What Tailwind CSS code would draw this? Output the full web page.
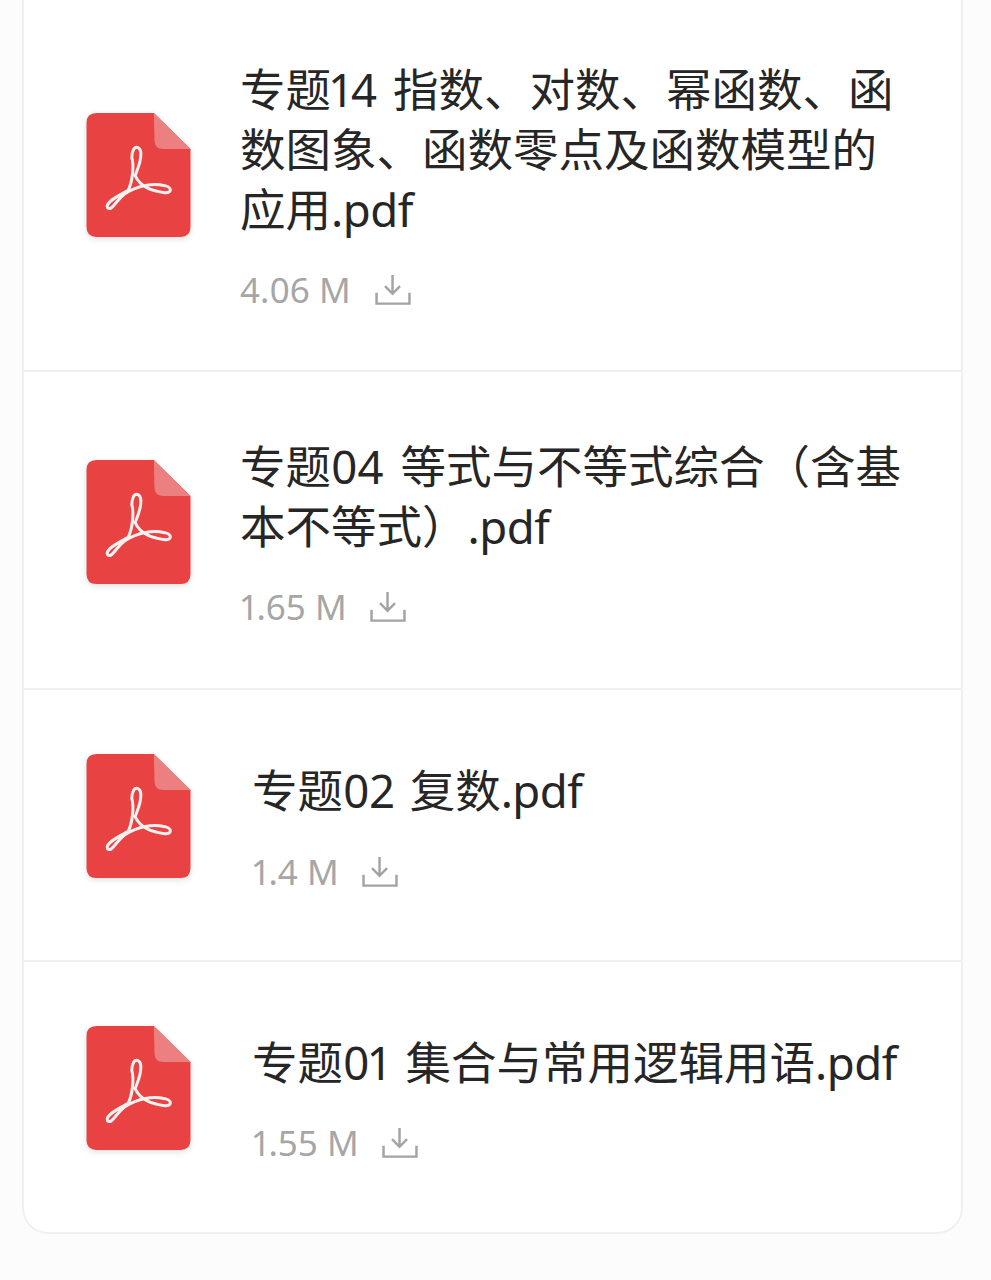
<!DOCTYPE html>
<html lang="zh">
<head>
<meta charset="utf-8">
<script src="https://cdn.jsdelivr.net/npm/@tailwindcss/browser@4"></script>
</head>
<body class="m-0 w-[991px] h-[1280px] overflow-hidden bg-[#fcfcfc] proportional-nums font-['Noto_Sans','Noto_Sans_CJK_SC',sans-serif]">
<div class="ml-[22px] w-[941px] h-[1234px] bg-white border-x-2 border-b-2 border-[#f0f0f0] rounded-b-[26px] flex flex-col">

  <div class="h-[372px] border-b-2 border-[#efefef] flex pl-[62px] shrink-0">
    <svg class="mt-[113px] w-[105px] h-[124px] shrink-0 drop-shadow-[0_2px_3px_rgba(0,0,0,0.12)]" viewBox="50 38 312 372"><path d="M80 38H252L362 146V380Q362 410 332 410H80Q50 410 50 380V68Q50 38 80 38Z" fill="#e94242"/><path d="M252 38L362 146H280Q254 146 254 120Z" fill="#ec7f7f"/><path d="M190 150C196 136 212 138 213 160C214 186 202 208 196 226C212 262 250 272 285 277C306 279 308 262 285 256C250 248 205 254 165 280C140 298 125 335 113 322C105 305 148 285 175 270C190 240 192 190 186 172C186 162 187 156 190 150Z" fill="none" stroke="#fdf1ef" stroke-width="9" stroke-linejoin="round"/></svg>
    <div class="ml-[49px] pt-[59px]">
      <p class="m-0 text-[45.5px] leading-[60px] text-[#262626] whitespace-nowrap [word-spacing:4px]">专题14 指数、对数、幂函数、函<br>数图象、函数零点及函数模型的<br>应用<span class="tracking-[-0.5px]">.pdf</span></p>
      <div class="flex items-center mt-[33px] h-[36px]"><span class="text-[35px] leading-[36px] text-[#a6a6a6]">4.06 M</span><svg class="ml-[24px] w-[36px] h-[32px]" viewBox="0 0 38 34" fill="none" stroke="#a3a3a3" stroke-width="2.6"><path d="M18.5 1V20M10.500 13L18.500 21L26.500 13M1.500 20V31.500H36.500V20"/></svg></div>
    </div>
  </div>

  <div class="mt-[2px] h-[316px] border-b-2 border-[#efefef] flex pl-[62px] shrink-0">
    <svg class="mt-[86px] w-[105px] h-[124px] shrink-0 drop-shadow-[0_2px_3px_rgba(0,0,0,0.12)]" viewBox="50 38 312 372"><path d="M80 38H252L362 146V380Q362 410 332 410H80Q50 410 50 380V68Q50 38 80 38Z" fill="#e94242"/><path d="M252 38L362 146H280Q254 146 254 120Z" fill="#ec7f7f"/><path d="M190 150C196 136 212 138 213 160C214 186 202 208 196 226C212 262 250 272 285 277C306 279 308 262 285 256C250 248 205 254 165 280C140 298 125 335 113 322C105 305 148 285 175 270C190 240 192 190 186 172C186 162 187 156 190 150Z" fill="none" stroke="#fdf1ef" stroke-width="9" stroke-linejoin="round"/></svg>
    <div class="ml-[49px] pt-[62px]">
      <p class="m-0 text-[45.5px] leading-[60px] text-[#262626] whitespace-nowrap [word-spacing:5px]">专题04 等式与不等式综合（含基<br>本不等式）<span class="tracking-[-0.5px]">.pdf</span></p>
      <div class="flex items-center mt-[33px] h-[36px]"><span class="ml-[1px] text-[35px] leading-[36px] text-[#a6a6a6]">1.65 M</span><svg class="ml-[23px] w-[36px] h-[32px]" viewBox="0 0 38 34" fill="none" stroke="#a3a3a3" stroke-width="2.6"><path d="M18.5 1V20M10.500 13L18.500 21L26.500 13M1.500 20V31.500H36.500V20"/></svg></div>
    </div>
  </div>

  <div class="h-[272px] border-b-2 border-[#efefef] flex pl-[62px] shrink-0">
    <svg class="mt-[64px] w-[105px] h-[124px] shrink-0 drop-shadow-[0_2px_3px_rgba(0,0,0,0.12)]" viewBox="50 38 312 372"><path d="M80 38H252L362 146V380Q362 410 332 410H80Q50 410 50 380V68Q50 38 80 38Z" fill="#e94242"/><path d="M252 38L362 146H280Q254 146 254 120Z" fill="#ec7f7f"/><path d="M190 150C196 136 212 138 213 160C214 186 202 208 196 226C212 262 250 272 285 277C306 279 308 262 285 256C250 248 205 254 165 280C140 298 125 335 113 322C105 305 148 285 175 270C190 240 192 190 186 172C186 162 187 156 190 150Z" fill="none" stroke="#fdf1ef" stroke-width="9" stroke-linejoin="round"/></svg>
    <div class="ml-[61px] pt-[70px]">
      <p class="m-0 text-[45.5px] leading-[60px] text-[#262626] whitespace-nowrap [word-spacing:3px]">专题02 复数<span class="tracking-[-0.5px]">.pdf</span></p>
      <div class="flex items-center mt-[34px] h-[36px]"><span class="ml-[1px] text-[35px] leading-[36px] text-[#a6a6a6]">1.4 M</span><svg class="ml-[23px] w-[36px] h-[32px]" viewBox="0 0 38 34" fill="none" stroke="#a3a3a3" stroke-width="2.6"><path d="M18.5 1V20M10.500 13L18.500 21L26.500 13M1.500 20V31.500H36.500V20"/></svg></div>
    </div>
  </div>

  <div class="flex-1 flex pl-[62px]">
    <svg class="mt-[64px] w-[105px] h-[124px] shrink-0 drop-shadow-[0_2px_3px_rgba(0,0,0,0.12)]" viewBox="50 38 312 372"><path d="M80 38H252L362 146V380Q362 410 332 410H80Q50 410 50 380V68Q50 38 80 38Z" fill="#e94242"/><path d="M252 38L362 146H280Q254 146 254 120Z" fill="#ec7f7f"/><path d="M190 150C196 136 212 138 213 160C214 186 202 208 196 226C212 262 250 272 285 277C306 279 308 262 285 256C250 248 205 254 165 280C140 298 125 335 113 322C105 305 148 285 175 270C190 240 192 190 186 172C186 162 187 156 190 150Z" fill="none" stroke="#fdf1ef" stroke-width="9" stroke-linejoin="round"/></svg>
    <div class="ml-[61px] pt-[70px]">
      <p class="m-0 text-[45.5px] leading-[60px] text-[#262626] whitespace-nowrap [word-spacing:4px]">专题01 集合与常用逻辑用语<span class="tracking-[-0.5px]">.pdf</span></p>
      <div class="flex items-center mt-[33px] h-[36px]"><span class="ml-[1px] text-[35px] leading-[36px] text-[#a6a6a6]">1.55 M</span><svg class="ml-[23px] w-[36px] h-[32px]" viewBox="0 0 38 34" fill="none" stroke="#a3a3a3" stroke-width="2.6"><path d="M18.5 1V20M10.500 13L18.500 21L26.500 13M1.500 20V31.500H36.500V20"/></svg></div>
    </div>
  </div>

</div>
</body>
</html>
